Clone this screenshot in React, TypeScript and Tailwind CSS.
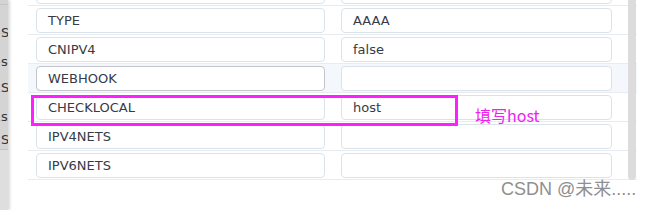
import React from "react";

const rows = [
  { k: "", v: "" },
  { k: "TYPE", v: "AAAA" },
  { k: "CNIPV4", v: "false" },
  { k: "WEBHOOK", v: "", hover: true },
  { k: "CHECKLOCAL", v: "host" },
  { k: "IPV4NETS", v: "" },
  { k: "IPV6NETS", v: "" },
];

export default function App() {
  return (
    <div className="w-[657px] h-[210px] relative overflow-hidden bg-white flex" style={{ fontFamily: '"DejaVu Sans", Verdana, sans-serif' }}>
      <div className="w-[8px] h-full bg-[#d4d4d4] shrink-0 relative overflow-hidden flex flex-col text-[13px] text-[#333] leading-none shadow-[2px_0_3px_rgba(0,0,0,0.15)] z-10">
        <div className="h-[5px] border-b border-[#c4c4c4]" />
        <div className="h-[29px] border-b border-[#c4c4c4] pl-[1px] pt-[21px]">S</div>
        <div className="h-[29px] border-b border-[#c4c4c4] pl-[1px] pt-[21px]">s</div>
        <div className="h-[29px] border-b border-[#c4c4c4] pl-[1px] pt-[18px]">S</div>
        <div className="h-[29px] border-b border-[#c4c4c4] pl-[1px] pt-[18px]">s</div>
        <div className="h-[29px] border-b border-[#c4c4c4] pl-[1px] pt-[12px]">S</div>
        <div className="flex-1 bg-[#dedede]" />
      </div>
      <div className="flex-1 relative">
        <div className="ml-[20px] w-[609px] mt-[-23px] flex flex-col">
          {rows.map((r, i) => (
            <div
              key={i}
              className={`h-[29px] border-b border-[#e8ecf0] flex items-start pt-[2px] pl-[8px] gap-[16px] ${r.hover ? "bg-[#f4f8fc]" : ""}`}
            >
              <div
                className={`w-[289px] h-[25px] rounded-[4px] border ${r.hover ? "border-[#c2c6cc]" : "border-[#dbe3ea]"} bg-white flex items-center pl-[11px] text-[13px] text-[#363b47]`}
              >
                {r.k}
              </div>
              <div className="w-[271px] h-[25px] rounded-[4px] border border-[#dbe3ea] bg-white flex items-center pl-[11px] text-[13px] text-[#363b47]">
                {r.v}
              </div>
            </div>
          ))}
        </div>
        <div className="absolute left-[620px] top-0 w-[8px] h-[180px] bg-[#dcdcdc] rounded-b-[4px]" />
        <div className="absolute left-[23px] top-[95px] w-[427px] h-[31px] border-[3px] border-[#ff1eff]" />
        <div
          className="absolute left-[467px] top-[107px] text-[16px] text-[#ee22ee] leading-none"
          style={{ fontFamily: '"Noto Sans CJK SC", "Liberation Sans", sans-serif' }}
        >
          填写host
        </div>
        <div
          className="absolute left-[493px] top-[180px] text-[18px] text-[#8f8f8f] leading-none"
          style={{ fontFamily: '"Liberation Sans", "Noto Sans CJK SC", sans-serif' }}
        >
          CSDN @未来.....
        </div>
      </div>
    </div>
  );
}
